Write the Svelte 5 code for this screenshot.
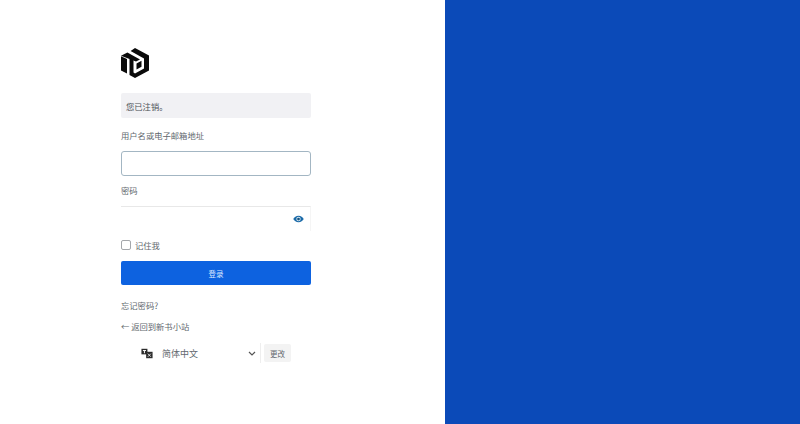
<script lang="ts">
  let username = $state('');
  let password = $state('');
  let remember = $state(false);
  let locale = $state('zh_CN');
</script>

<div class="page">
  <main class="side">
    <div class="column">
      <svg class="logo" viewBox="0 0 30 30" aria-label="logo">
        <path fill="#0a0a0a" d="M15 0 L29 7.6 L29 22.6 L15 30 L9.5 27 L9.5 11 L13.5 8.8 L13.5 24.6 L15 25.4 L24 20.4 L24 10.4 L10.6 3 Z" />
        <path fill="#0a0a0a" d="M7.4 4.6 L20 11.4 L16 13.6 L1 7.8 Z" />
        <path fill="#0a0a0a" d="M1 8.2 L7 11 L7 25.6 L1 22.4 Z" />
        <path fill="#0a0a0a" d="M16.5 15.4 L21.5 12.8 L21.5 18.8 L16.5 21.6 Z" />
      </svg>

      <div class="notice">您已注销。</div>

      <form class="login" onsubmit={(e) => e.preventDefault()}>
        <label class="field">
          <span>用户名或电子邮箱地址</span>
          <input class="focused" type="text" bind:value={username} />
        </label>

        <label class="field">
          <span>密码</span>
          <div class="password">
            <input class="plain" type="password" bind:value={password} />
            <svg class="eye" viewBox="0 0 12 8" aria-hidden="true">
              <path fill="#1a6aa8" d="M6 0.4 C3.4 0.4 1.4 2 0.3 4 C1.4 6 3.4 7.6 6 7.6 C8.6 7.6 10.6 6 11.7 4 C10.6 2 8.6 0.4 6 0.4 Z" />
              <circle cx="6" cy="4" r="2.4" fill="#d8e8f3" />
              <circle cx="6" cy="4" r="1.5" fill="#15527f" />
            </svg>
          </div>
        </label>

        <label class="remember">
          <input type="checkbox" bind:checked={remember} />
          <span>记住我</span>
        </label>

        <button class="submit" type="submit">登录</button>
      </form>

      <p class="link first">忘记密码?</p>
      <p class="link second">← 返回到新书小站</p>

      <div class="language">
        <svg class="translate" viewBox="0 0 14 12" aria-hidden="true">
          <path fill="#2b2b2b" d="M0.5 0.5 H7.5 V7 H0.5 Z" />
          <path fill="#f4f4f4" d="M2.2 2 H5.8 V3 H4.6 V5.6 H3.4 V3 H2.2 Z" />
          <path fill="#2b2b2b" d="M6 4 H13.5 V11.5 H6 Z" />
          <path fill="none" stroke="#f4f4f4" stroke-width="1" d="M8 6.2 L11.5 9.8 M11.5 6.2 L8 9.8" />
        </svg>
        <div class="select">
          <select bind:value={locale}>
            <option value="zh_CN">简体中文</option>
          </select>
          <svg class="chevron" viewBox="0 0 8 5" aria-hidden="true">
            <path fill="none" stroke="#555" stroke-width="1.2" d="M1 1 L4 4 L7 1" />
          </svg>
        </div>
        <button class="change" type="button">更改</button>
      </div>
    </div>
  </main>
  <aside class="panel"></aside>
</div>

<style>
  :global(body) {
    margin: 0;
    background: #fff;
  }

  .page {
    display: flex;
    width: 800px;
    height: 424px;
    overflow: hidden;
    font-family: "Noto Sans CJK SC", "Noto Sans", sans-serif;
    font-size: 8.3px;
    color: #62686e;
  }

  .side {
    width: 445px;
    flex-shrink: 0;
    box-sizing: border-box;
    padding: 48px 0 0 120px;
    background: #fff;
  }

  .column {
    width: 191px;
    display: flex;
    flex-direction: column;
  }

  .panel {
    flex: 1;
    background: #0b4ab8;
  }

  .logo {
    width: 30px;
    height: 30px;
    display: block;
  }

  .notice {
    margin: 15px 0 0 1px;
    height: 25px;
    box-sizing: border-box;
    padding-left: 5px;
    display: flex;
    align-items: center;
    background: #f1f1f4;
    border-radius: 2px;
    color: #4a5056;
  }

  .login {
    display: flex;
    flex-direction: column;
    margin: 11px 0 0 1px;
  }

  .field {
    display: flex;
    flex-direction: column;
    margin-bottom: 7px;
  }

  .field span {
    line-height: 12px;
    margin-bottom: 10px;
  }

  .field + .field {
    margin-top: 1px;
    margin-bottom: 8px;
  }

  input.focused,
  input.plain {
    display: block;
    box-sizing: border-box;
    width: 100%;
    height: 25px;
    margin: 0;
    padding: 0 6px;
    outline: none;
    background: #fff;
  }

  input.focused {
    border: 1px solid #a3b6c3;
    border-radius: 3px;
  }

  .password {
    position: relative;
  }

  input.plain {
    border: none;
    border-top: 1px solid #e8e8e8;
    border-right: 1px solid #f5f5f5;
  }

  .eye {
    position: absolute;
    right: 7px;
    top: 9px;
    width: 11px;
    height: 8px;
  }

  .remember {
    display: flex;
    align-items: center;
    gap: 4px;
    height: 12px;
  }

  .remember input {
    appearance: none;
    width: 10px;
    height: 10px;
    margin: 0;
    border: 1px solid #a4a7ab;
    border-radius: 2px;
    background: #fff;
  }

  .submit {
    margin-top: 10px;
    height: 24px;
    border: none;
    border-radius: 2px;
    background: #0d62e0;
    color: #dfeaff;
    font: inherit;
    font-size: 7.5px;
    padding: 0;
  }

  .link {
    margin: 0 0 0 1px;
    line-height: 12px;
  }

  .first {
    margin-top: 14px;
  }

  .second {
    margin-top: 9px;
  }

  .language {
    display: flex;
    align-items: center;
    margin-top: 11px;
    margin-left: 21px;
    height: 20px;
  }

  .translate {
    width: 12px;
    height: 11px;
    margin-right: 9px;
  }

  .select {
    position: relative;
    width: 98px;
    height: 20px;
    border-right: 1px solid #eee;
    margin-right: 3px;
  }

  .select select {
    appearance: none;
    width: 100%;
    height: 100%;
    border: none;
    background: transparent;
    font: inherit;
    font-size: 9px;
    color: #62686e;
    padding: 0;
    outline: none;
  }

  .chevron {
    position: absolute;
    right: 4px;
    top: 8px;
    width: 8px;
    height: 5px;
  }

  .change {
    width: 27px;
    height: 18px;
    border: none;
    border-radius: 2px;
    background: #f3f3f3;
    color: #62686e;
    font: inherit;
    font-size: 7.5px;
    padding: 0;
  }
</style>
